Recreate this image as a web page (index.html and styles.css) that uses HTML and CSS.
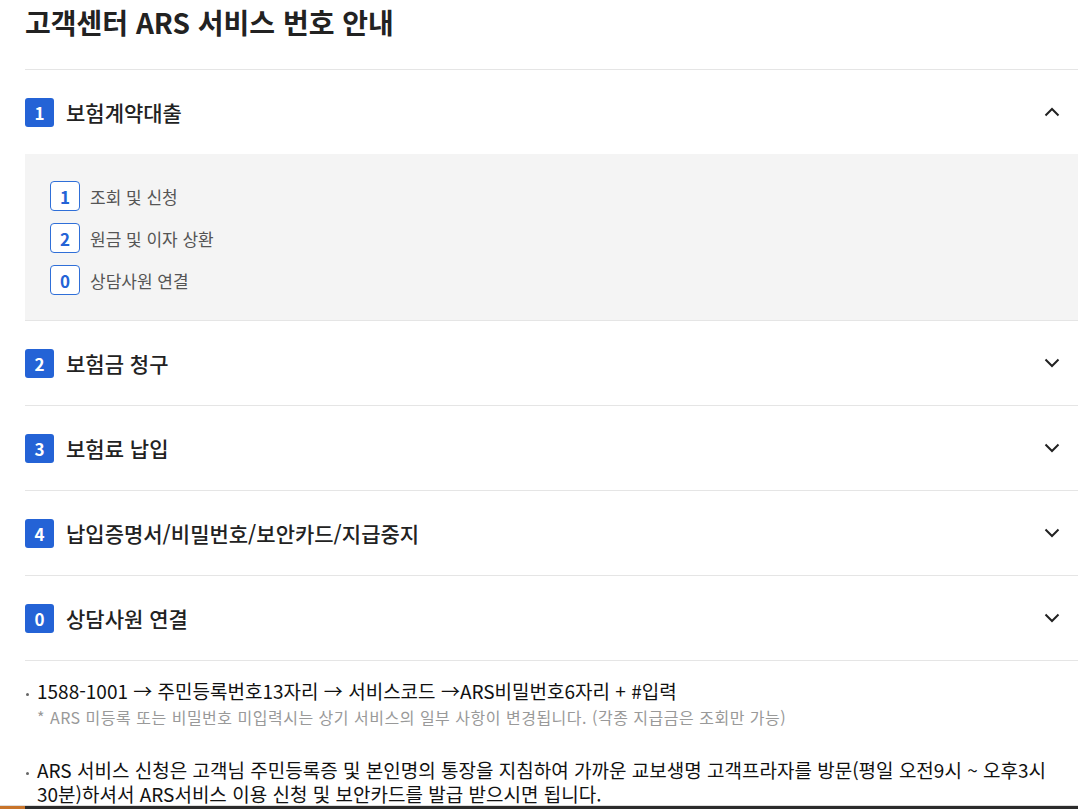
FILE: index.html
```html
<!DOCTYPE html>
<html lang="ko">
<head>
  <meta charset="UTF-8">
  <title>고객센터 ARS 서비스 번호 안내</title>
  <link rel="stylesheet" href="styles.css">
</head>
<body>

<div class="page">
  <h1 class="title">고객센터 ARS 서비스 번호 안내</h1>

  <div class="acc">
    <div class="acc-item open">
      <div class="acc-head">
        <span class="num">1</span>
        <span class="acc-title">보험계약대출</span>
        <svg class="chev" viewBox="0 0 16 10" width="16" height="10"><path d="M1.5 8.5 L8 2 L14.5 8.5" fill="none" stroke="#222" stroke-width="2"/></svg>
      </div>
      <div class="acc-body">
        <div class="sub"><span class="sub-num">1</span>조회 및 신청</div>
        <div class="sub"><span class="sub-num">2</span>원금 및 이자 상환</div>
        <div class="sub"><span class="sub-num">0</span>상담사원 연결</div>
      </div>
    </div>

    <div class="acc-item">
      <div class="acc-head">
        <span class="num">2</span>
        <span class="acc-title">보험금 청구</span>
        <svg class="chev" viewBox="0 0 16 10" width="16" height="10"><path d="M1.5 1.5 L8 8 L14.5 1.5" fill="none" stroke="#222" stroke-width="2"/></svg>
      </div>
    </div>

    <div class="acc-item">
      <div class="acc-head">
        <span class="num">3</span>
        <span class="acc-title">보험료 납입</span>
        <svg class="chev" viewBox="0 0 16 10" width="16" height="10"><path d="M1.5 1.5 L8 8 L14.5 1.5" fill="none" stroke="#222" stroke-width="2"/></svg>
      </div>
    </div>

    <div class="acc-item">
      <div class="acc-head">
        <span class="num">4</span>
        <span class="acc-title">납입증명서/비밀번호/보안카드/지급중지</span>
        <svg class="chev" viewBox="0 0 16 10" width="16" height="10"><path d="M1.5 1.5 L8 8 L14.5 1.5" fill="none" stroke="#222" stroke-width="2"/></svg>
      </div>
    </div>

    <div class="acc-item">
      <div class="acc-head">
        <span class="num">0</span>
        <span class="acc-title">상담사원 연결</span>
        <svg class="chev" viewBox="0 0 16 10" width="16" height="10"><path d="M1.5 1.5 L8 8 L14.5 1.5" fill="none" stroke="#222" stroke-width="2"/></svg>
      </div>
    </div>
  </div>

  <ul class="notes">
    <li>
      1588-1001 → 주민등록번호13자리 → 서비스코드 →ARS비밀번호6자리 + #입력
      <p class="note-sub">* ARS 미등록 또는 비밀번호 미입력시는 상기 서비스의 일부 사항이 변경됩니다. (각종 지급금은 조회만 가능)</p>
    </li>
    <li>
      ARS 서비스 신청은 고객님 주민등록증 및 본인명의 통장을 지침하여 가까운 교보생명 고객프라자를 방문(평일 오전9시 ~ 오후3시 30분)하셔서 ARS서비스 이용 신청 및 보안카드를 발급 받으시면 됩니다.
    </li>
  </ul>
</div>

<div class="bottom-bar"><span class="bar-accent"></span></div>

</body>
</html>
```

FILE: styles.css
```css
body {
  margin: 0;
  background-color: #fff;
  color: #222;
  font-family: "Noto Sans CJK KR", "Noto Sans", sans-serif;
}
.page {
  padding-left: 25px;
}
.title {
  margin: 0;
  font-size: 28px;
  line-height: 44px;
  font-weight: 700;
  color: #222;
  padding-bottom: 25px;
  border-bottom: 1px solid #e5e5e5;
}
.acc-item {
  border-bottom: 1px solid #e5e5e5;
}
.acc-head {
  display: flex;
  align-items: center;
  height: 84px;
  padding-right: 18px;
}
.num {
  display: flex;
  align-items: center;
  justify-content: center;
  width: 29px;
  height: 29px;
  border-radius: 3px;
  background-color: #2463d6;
  color: #fff;
  font-size: 17px;
  font-weight: 700;
}
.acc-title {
  flex: 1;
  margin-left: 12px;
  font-size: 21px;
  font-weight: 500;
}
.acc-body {
  display: flex;
  flex-direction: column;
  gap: 12px;
  background-color: #f4f4f4;
  padding: 27px 25px 25px;
}
.sub {
  display: flex;
  align-items: center;
  font-size: 17px;
  color: #555;
}
.sub-num {
  display: flex;
  align-items: center;
  justify-content: center;
  box-sizing: border-box;
  width: 30px;
  height: 30px;
  margin-right: 10px;
  border: 1px solid #2f6fd8;
  border-radius: 4px;
  background-color: #fff;
  color: #2463d6;
  font-size: 17px;
  font-weight: 700;
}
.notes {
  list-style: none;
  margin: 0;
  padding: 18px 18px 0 0;
}
.notes li {
  position: relative;
  padding-left: 12px;
  margin-bottom: 31px;
  font-size: 19px;
  line-height: 24px;
  color: #111;
}
.notes li::before {
  content: "";
  position: absolute;
  left: 1px;
  top: 14px;
  width: 3px;
  height: 3px;
  border-radius: 50%;
  background-color: #666;
}
.note-sub {
  margin: 4px 0 0;
  font-size: 16px;
  line-height: 20px;
  letter-spacing: 0.5px;
  color: #999;
}
.bottom-bar {
  position: fixed;
  left: 0;
  right: 0;
  bottom: 0;
  height: 3px;
  border-top: 1px solid #ddd;
  background-color: #2b2b2b;
}
.bar-accent {
  display: block;
  width: 25px;
  height: 3px;
  background-color: #c8742a;
}
```
